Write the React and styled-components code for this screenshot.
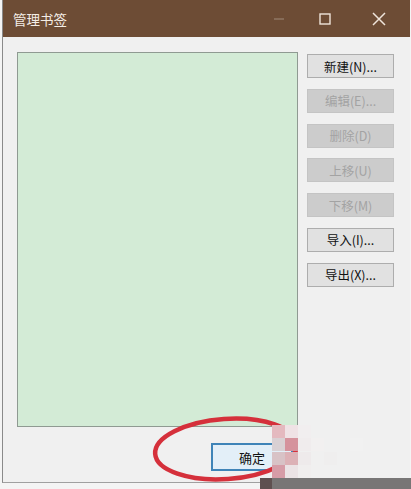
import React from 'react'
import styled, { createGlobalStyle } from 'styled-components'

const Global = createGlobalStyle`
  html, body { margin:0; padding:0; }
  body {
    width:411px;
    height:489px;
    overflow:hidden;
    background:#f4f4f4;
    font-family:"Noto Sans CJK SC", "Liberation Sans", sans-serif;
  }
`

const Page = styled.div`
  position:relative;
  width:411px;
  height:489px;
  padding-left:2px;
  box-sizing:border-box;
  background:#f4f4f4;
`

const Window = styled.div`
  width:408px;
  height:483px;
  box-sizing:border-box;
  border-left:1px solid #8a8a8a;
  border-bottom:1px solid #a0a0a0;
  background:#f0f0f0;
  display:flex;
  flex-direction:column;
`

const TitleBar = styled.div`
  height:37px;
  flex:none;
  background:#6d4c35;
  display:flex;
  align-items:center;
  padding-left:10px;
  color:#f4ede6;
  font-size:13.5px;
`

const Title = styled.div`
  flex:1;
`

const Control = styled.div`
  width:${p => p.w}px;
  height:37px;
  display:flex;
  align-items:center;
  justify-content:center;
  color:${p => p.dim ? '#a08a7a' : '#efe4da'};
`

const Body = styled.div`
  flex:1;
  display:grid;
  grid-template-columns:281px 87px;
  grid-template-rows:375px auto;
  column-gap:9px;
  padding:15px 0 0 14px;
`

const ListBox = styled.div`
  background:#d3ebd6;
  border:1px solid #8f9a92;
  box-sizing:border-box;
`

const Side = styled.div`
  display:flex;
  flex-direction:column;
  gap:10.8px;
  margin-top:2px;
`

const Button = styled.div`
  height:24px;
  box-sizing:border-box;
  border:1px solid ${p => p.disabled ? '#c4c4c4' : '#adadad'};
  background:${p => p.disabled ? '#cccccc' : '#e1e1e1'};
  color:${p => p.disabled ? '#a3a3a3' : '#111'};
  font-size:12.5px;
  display:flex;
  align-items:center;
  justify-content:center;
`

const Footer = styled.div`
  padding:16px 0 0 194px;
`

const OkButton = styled.div`
  width:82px;
  height:28px;
  box-sizing:border-box;
  border:2px solid #3f84b8;
  background:#e3eff8;
  color:#111;
  font-size:13px;
  display:flex;
  align-items:center;
  justify-content:center;
`

const Mark = styled.svg`
  position:absolute;
  left:0;
  top:0;
  pointer-events:none;
`

const buttons = [
  { label: '新建(N)...' },
  { label: '编辑(E)...', disabled: true },
  { label: '删除(D)', disabled: true },
  { label: '上移(U)', disabled: true },
  { label: '下移(M)', disabled: true },
  { label: '导入(I)...' },
  { label: '导出(X)...' },
]

// mosaic watermark blocks, bottom right
const tiles = [
  [272, 425, '#e4b9bf'], [272, 438, '#d9d0d3'], [272, 452, '#d8c2c6'], [272, 465, '#d69ca7'],
  [285, 425, '#efe2e5'], [285, 438, '#d5929c'], [285, 452, '#dcb1b6'], [285, 465, '#ebe3e5'],
  [298, 425, '#f1eeef'], [298, 438, '#f0eced'], [298, 452, '#eeeaeb'], [298, 465, '#f0eeee'],
  [311, 438, '#f2f0f0'], [324, 452, '#efeeee'], [350, 438, '#f1f1f1'],
]

export default function App() {
  return (
    <>
      <Global />
      <Page>
        <Window>
          <TitleBar>
            <Title>管理书签</Title>
            <Control w={46} dim>
              <svg width="12" height="12"><line x1="1" y1="6" x2="11" y2="6" stroke="currentColor" strokeWidth="1" /></svg>
            </Control>
            <Control w={46}>
              <svg width="12" height="12"><rect x="1" y="1" width="10" height="10" fill="none" stroke="currentColor" strokeWidth="1.4" /></svg>
            </Control>
            <Control w={62}>
              <svg width="14" height="14"><path d="M1 1L13 13M13 1L1 13" stroke="currentColor" strokeWidth="1.5" /></svg>
            </Control>
          </TitleBar>
          <Body>
            <ListBox />
            <Side>
              {buttons.map((b, i) => (
                <Button key={i} disabled={b.disabled}>{b.label}</Button>
              ))}
            </Side>
            <Footer>
              <OkButton>确定</OkButton>
            </Footer>
          </Body>
        </Window>
        <Mark width="411" height="489">
          <ellipse cx="226" cy="449" rx="71" ry="30" fill="none" stroke="#d5303b" strokeWidth="4.5" transform="rotate(-4 226 449)" />
          {tiles.map(([x, y, c], i) => (
            <rect key={i} x={x} y={y} width="13" height="13" fill={c} />
          ))}
          <rect x="260" y="478" width="12" height="11" fill="#5e5050" />
          <rect x="272" y="478" width="139" height="11" fill="#787676" />
        </Mark>
      </Page>
    </>
  )
}
